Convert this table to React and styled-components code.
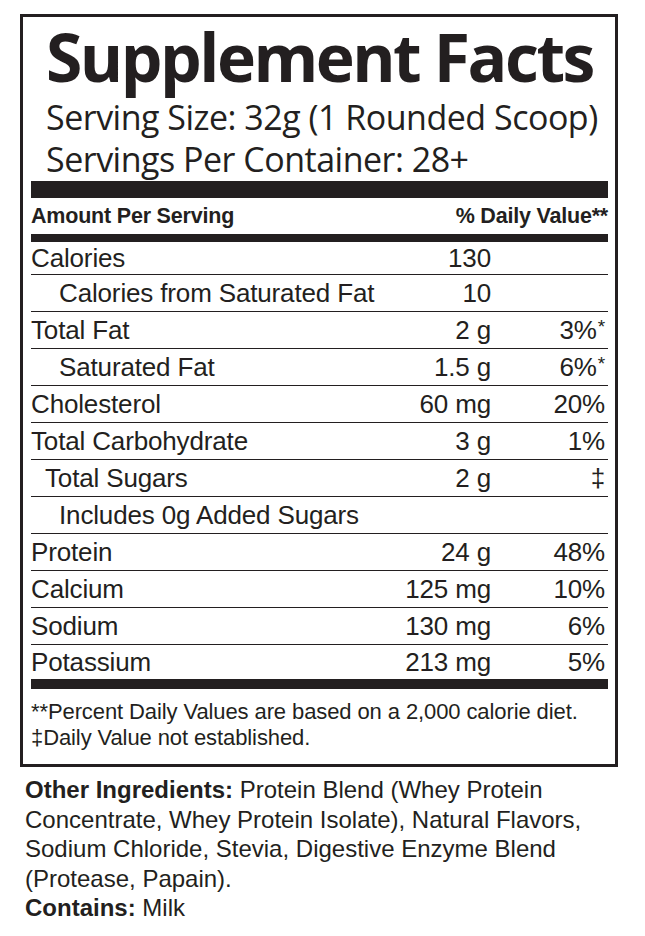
import React from 'react'
import styled, { createGlobalStyle } from 'styled-components'

const GlobalStyle = createGlobalStyle`
    html, body {
        margin: 0;
        padding: 0;
        background: #ffffff;
    }
    body {
        color: #231f20;
        font-family: "Liberation Sans", Arial, sans-serif;
    }
`

const Page = styled.div`
    width: 645px;
    padding: 14px 0 20px 20px;
    box-sizing: border-box;
`

const Label = styled.div`
    width: 598px;
    border: 3px solid #231f20;
    box-sizing: border-box;
    padding: 0 7px 13px 8px;
`

const Title = styled.h1`
    margin: 1px 0 0;
    font-family: "Open Sans", sans-serif;
    font-weight: 700;
    font-size: 66px;
    line-height: 76px;
    letter-spacing: -2.5px;
    padding-left: 15px;
    white-space: nowrap;
`

const Serving = styled.div`
    font-family: "Open Sans", sans-serif;
    font-size: 34px;
    line-height: 42px;
    letter-spacing: -0.5px;
    padding-left: 15px;
    white-space: nowrap;
    &:first-of-type {
        margin-top: 2px;
    }
`

const Bar = styled.div`
    height: ${p => p.$h}px;
    background: #231f20;
    margin-top: ${p => p.$mt || 0}px;
`

const HeadRow = styled.div`
    display: flex;
    justify-content: space-between;
    font-weight: 700;
    font-size: 21.5px;
    line-height: 36px;
    letter-spacing: -0.2px;
`

const Row = styled.div`
    display: grid;
    grid-template-columns: 1fr 110px 117px;
    align-items: center;
    height: ${p => (p.$first ? 32 : p.$last ? 34 : 36)}px;
    font-size: 26px;
    letter-spacing: -0.15px;
    border-top: ${p => (p.$first ? 'none' : '1px solid #231f20')};
`

const Name = styled.span`
    padding-left: ${p => p.$indent || 0}px;
    white-space: nowrap;
`

const Amount = styled.span`
    text-align: right;
    white-space: nowrap;
`

const Percent = styled.span`
    text-align: right;
    white-space: nowrap;
    padding-right: 3px;
`

const Star = styled.sup`
    font-size: 19px;
    vertical-align: 6px;
    line-height: 0;
    margin-left: 1px;
`

const Notes = styled.div`
    padding-top: 10px;
    font-size: 22px;
    line-height: 26px;
    letter-spacing: -0.1px;
`

const Ingredients = styled.div`
    padding: 8px 0 0 5px;
    font-size: 24px;
    line-height: 29.5px;
    white-space: nowrap;
`

const rows = [
    { name: 'Calories', amount: '130', pct: '' },
    { name: 'Calories from Saturated Fat', amount: '10', pct: '', indent: 28 },
    { name: 'Total Fat', amount: '2 g', pct: '3%', star: true },
    { name: 'Saturated Fat', amount: '1.5 g', pct: '6%', star: true, indent: 28 },
    { name: 'Cholesterol', amount: '60 mg', pct: '20%' },
    { name: 'Total Carbohydrate', amount: '3 g', pct: '1%' },
    { name: 'Total Sugars', amount: '2 g', pct: '‡', indent: 14 },
    { name: 'Includes 0g Added Sugars', amount: '', pct: '', indent: 28 },
    { name: 'Protein', amount: '24 g', pct: '48%' },
    { name: 'Calcium', amount: '125 mg', pct: '10%' },
    { name: 'Sodium', amount: '130 mg', pct: '6%' },
    { name: 'Potassium', amount: '213 mg', pct: '5%' },
]

const App = () => {
    return (
        <Page>
            <GlobalStyle />
            <Label>
                <Title>Supplement Facts</Title>
                <Serving>Serving Size: 32g (1 Rounded Scoop)</Serving>
                <Serving>Servings Per Container: 28+</Serving>
                <Bar $h={17} $mt={1} />
                <HeadRow>
                    <span>Amount Per Serving</span>
                    <span>% Daily Value**</span>
                </HeadRow>
                <Bar $h={8} />
                {rows.map((r, i) => (
                    <Row key={r.name} $first={i === 0} $last={i === rows.length - 1}>
                        <Name $indent={r.indent}>{r.name}</Name>
                        <Amount>{r.amount}</Amount>
                        <Percent>
                            {r.pct}
                            {r.star && <Star>*</Star>}
                        </Percent>
                    </Row>
                ))}
                <Bar $h={10} />
                <Notes>
                    **Percent Daily Values are based on a 2,000 calorie diet.
                    <br />
                    ‡Daily Value not established.
                </Notes>
            </Label>
            <Ingredients>
                <b>Other Ingredients:</b> Protein Blend (Whey Protein
                <br />
                Concentrate, Whey Protein Isolate), Natural Flavors,
                <br />
                Sodium Chloride, Stevia, Digestive Enzyme Blend
                <br />
                (Protease, Papain).
                <br />
                <b>Contains:</b> Milk
            </Ingredients>
        </Page>
    )
}

export default App
